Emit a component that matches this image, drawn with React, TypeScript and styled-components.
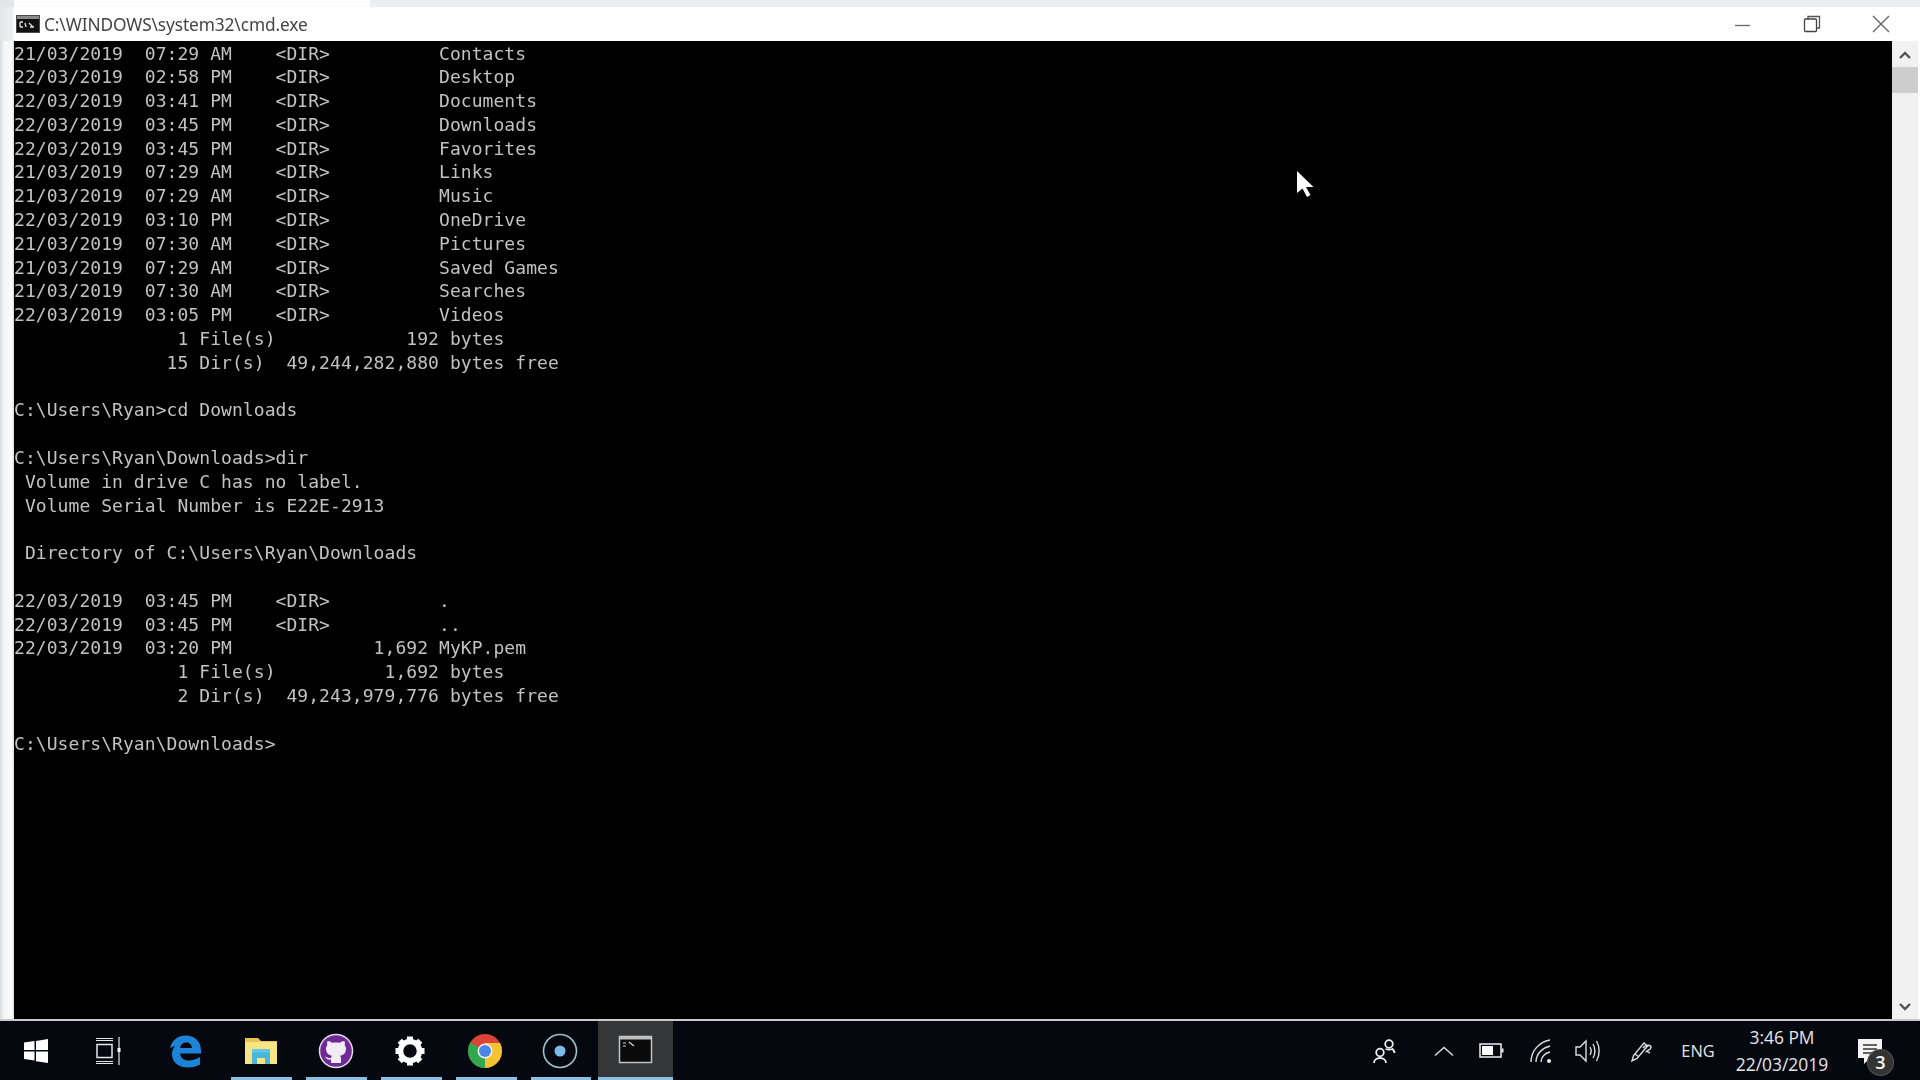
import React from "react";
import styled, { createGlobalStyle } from "styled-components";

const Global = createGlobalStyle`
  html, body { margin: 0; padding: 0; background: #000; overflow: hidden; }
`;

const Page = styled.div`
  position: relative;
  width: 1920px;
  height: 1080px;
  display: flex;
  flex-direction: column;
  overflow: hidden;
  background: #fff;
`;

const TopStrip = styled.div`
  height: 7px;
  display: flex;
  flex: none;
`;
const StripEdge = styled.div`
  width: 14px;
  background: #e3e5ea;
`;
const StripWhite = styled.div`
  width: 356px;
  background: #fcfcfc;
`;
const StripRest = styled.div`
  flex: 1;
  background: #eceef0;
`;

const TitleBar = styled.header`
  height: 34px;
  flex: none;
  display: flex;
  align-items: center;
  background: linear-gradient(90deg, #e4e6ea 0, #eef0f3 13px, #fff 14px);
  padding-left: 16px;
`;
const TitleIcon = styled.svg`
  width: 24px;
  height: 18px;
  flex: none;
  margin-right: 4px;
`;
const TitleText = styled.span`
  font-family: "Noto Sans", "Open Sans", sans-serif;
  font-size: 17.3px;
  color: #444;
  letter-spacing: -0.1px;
  filter: blur(0.3px);
`;
const WindowControls = styled.div`
  margin-left: auto;
  display: flex;
  align-items: center;
  margin-right: 29px;
  gap: 49px;
`;
const ControlIcon = styled.svg`
  width: 20px;
  height: 20px;
  display: block;
`;

const Body = styled.main`
  flex: 1;
  display: flex;
  min-height: 0;
`;
const LeftEdge = styled.div`
  width: 14px;
  flex: none;
  background: linear-gradient(90deg, #d8dade 0, #f4f5f7 4px, #fcfcfc 12px, #d8d8d8 14px);
`;
const Terminal = styled.pre`
  flex: 1;
  margin: 0;
  padding: 0.5px 0 0;
  background: #000;
  color: #c2c2c2;
  font-family: "DejaVu Sans Mono", "Liberation Mono", monospace;
  font-size: 18px;
  letter-spacing: 0.06px;
  line-height: 23.8px;
  overflow: hidden;
  filter: blur(0.4px);
`;
const Row = styled.div`
  height: 23.8px;
  white-space: pre;
`;
const Scrollbar = styled.aside`
  width: 28px;
  flex: none;
  display: flex;
  flex-direction: column;
  align-items: center;
  background: #f1f1f1;
  border-right: 2px solid #fff;
  box-sizing: border-box;
`;
const ScrollArrow = styled.svg`
  width: 16px;
  height: 12px;
  flex: none;
  margin: 8px 0 6px;
`;
const ScrollThumb = styled.div`
  width: 100%;
  height: 26px;
  background: #cdcdcd;
  flex: none;
`;
const ScrollTrack = styled.div`
  flex: 1;
`;

const Taskbar = styled.footer`
  height: 61px;
  flex: none;
  box-sizing: border-box;
  border-top: 2px solid #c9c9c9;
  display: flex;
  align-items: stretch;
  background: #05080e;
`;
const TaskItem = styled.div<{ $open?: boolean; $active?: boolean }>`
  position: relative;
  width: 74.8px;
  flex: none;
  box-sizing: border-box;
  padding-right: ${(p) => (p.$active ? "0" : "2px")};
  display: flex;
  align-items: center;
  justify-content: center;
  background: ${(p) => (p.$active ? "#353638" : "transparent")};
  &::after {
    content: "";
    display: ${(p) => (p.$open || p.$active ? "block" : "none")};
    position: absolute;
    bottom: 0;
    height: 3px;
    left: ${(p) => (p.$active ? "0" : "7px")};
    right: ${(p) => (p.$active ? "0" : "7px")};
    background: #8cbfe4;
  }
`;
const TaskIcon = styled.svg`
  width: 36px;
  height: 36px;
  display: block;
`;
const Tray = styled.div`
  margin-left: auto;
  display: flex;
  align-items: center;
  padding-right: 30px;
`;
const TrayItem = styled.div<{ $ml: number; $w?: number }>`
  width: ${(p) => p.$w ?? 40}px;
  margin-left: ${(p) => p.$ml}px;
  display: flex;
  justify-content: center;
  align-items: center;
  position: relative;
`;
const TrayIcon = styled.svg`
  width: 30px;
  height: 30px;
  display: block;
`;
const TrayText = styled.span`
  font-family: "Open Sans", "Noto Sans", sans-serif;
  font-size: 16.4px;
  color: #e4e4e4;
`;
const Clock = styled.div`
  display: flex;
  flex-direction: column;
  align-items: center;
  font-family: "Open Sans", "Noto Sans", sans-serif;
  font-size: 17.4px;
  line-height: 27px;
  color: #e6e6e6;
  white-space: nowrap;
`;
const Badge = styled.span`
  position: absolute;
  right: -3px;
  bottom: -9px;
  width: 25px;
  height: 25px;
  border-radius: 50%;
  background: #333;
  box-shadow: 0 0 0 1px #555;
  color: #f6f6f6;
  font-family: "Open Sans", sans-serif;
  font-size: 18px;
  font-weight: 600;
  display: flex;
  align-items: center;
  justify-content: center;
`;
const Cursor = styled.svg`
  position: absolute;
  left: 1295px;
  top: 170px;
  width: 20px;
  height: 28px;
`;

const lines = [
  "21/03/2019  07:29 AM    <DIR>          Contacts",
  "22/03/2019  02:58 PM    <DIR>          Desktop",
  "22/03/2019  03:41 PM    <DIR>          Documents",
  "22/03/2019  03:45 PM    <DIR>          Downloads",
  "22/03/2019  03:45 PM    <DIR>          Favorites",
  "21/03/2019  07:29 AM    <DIR>          Links",
  "21/03/2019  07:29 AM    <DIR>          Music",
  "22/03/2019  03:10 PM    <DIR>          OneDrive",
  "21/03/2019  07:30 AM    <DIR>          Pictures",
  "21/03/2019  07:29 AM    <DIR>          Saved Games",
  "21/03/2019  07:30 AM    <DIR>          Searches",
  "22/03/2019  03:05 PM    <DIR>          Videos",
  "               1 File(s)            192 bytes",
  "              15 Dir(s)  49,244,282,880 bytes free",
  "",
  "C:\\Users\\Ryan>cd Downloads",
  "",
  "C:\\Users\\Ryan\\Downloads>dir",
  " Volume in drive C has no label.",
  " Volume Serial Number is E22E-2913",
  "",
  " Directory of C:\\Users\\Ryan\\Downloads",
  "",
  "22/03/2019  03:45 PM    <DIR>          .",
  "22/03/2019  03:45 PM    <DIR>          ..",
  "22/03/2019  03:20 PM             1,692 MyKP.pem",
  "               1 File(s)          1,692 bytes",
  "               2 Dir(s)  49,243,979,776 bytes free",
  "",
  "C:\\Users\\Ryan\\Downloads>",
];

const Gear = () => {
  const teeth = [0, 45, 90, 135, 180, 225, 270, 315];
  return (
    <TaskIcon viewBox="0 0 36 36">
      <circle cx="18" cy="18" r="9.5" fill="none" stroke="#fff" strokeWidth="5.5" />
      {teeth.map((a) => (
        <rect key={a} x="15" y="3.5" width="6" height="6" fill="#fff" transform={`rotate(${a} 18 18)`} />
      ))}
    </TaskIcon>
  );
};

export default function App() {
  return (
    <Page>
      <Global />
      <TopStrip>
        <StripEdge />
        <StripWhite />
        <StripRest />
      </TopStrip>
      <TitleBar>
        <TitleIcon viewBox="0 0 24 18">
          <rect width="24" height="18" fill="#4a4a4a" />
          <rect x="1" y="1" width="22" height="3" fill="#8a8a8a" />
          <rect x="1" y="4" width="22" height="13" fill="#111" />
          <path d="M4 7h3M4 12h3M4 7v5M9 8l1 4M13 8l4 4 M14 12h4" stroke="#ddd" strokeWidth="1.3" fill="none" />
        </TitleIcon>
        <TitleText>C:\WINDOWS\system32\cmd.exe</TitleText>
        <WindowControls>
          <ControlIcon viewBox="0 0 20 20">
            <path d="M2 11.5h15" stroke="#666" strokeWidth="1.3" />
          </ControlIcon>
          <ControlIcon viewBox="0 0 20 20">
            <path d="M6 5V2.5h11.5V14H15" fill="none" stroke="#555" strokeWidth="1.3" />
            <rect x="2.5" y="5" width="12" height="12.5" rx="1" fill="none" stroke="#444" strokeWidth="1.3" />
          </ControlIcon>
          <ControlIcon viewBox="0 0 20 20">
            <path d="M2 2l16 16M18 2L2 18" stroke="#666" strokeWidth="1.4" />
          </ControlIcon>
        </WindowControls>
      </TitleBar>
      <Body>
        <LeftEdge />
        <Terminal>
          {lines.map((l, i) => (
            <Row key={i}>{l}</Row>
          ))}
        </Terminal>
        <Scrollbar>
          <ScrollArrow viewBox="0 0 16 12">
            <path d="M3 9l5-5 5 5" fill="none" stroke="#555" strokeWidth="2.4" />
          </ScrollArrow>
          <ScrollThumb />
          <ScrollTrack />
          <ScrollArrow viewBox="0 0 16 12">
            <path d="M3 3l5 5 5-5" fill="none" stroke="#555" strokeWidth="2.4" />
          </ScrollArrow>
        </Scrollbar>
      </Body>
      <Taskbar>
        <TaskItem>
          <TaskIcon viewBox="0 0 36 36">
            <path d="M6 9.5l10.5-1.4V17H6zM18 7.9L30 6v11H18zM6 18.6h10.5v8.8L6 26zM18 18.6h12V30l-12-1.8z" fill="#fff" />
          </TaskIcon>
        </TaskItem>
        <TaskItem>
          <TaskIcon viewBox="3 0 36 36">
            <path d="M6 7.5h17M6 28.5h17M6 30.5h17M6 5.5h17" stroke="#e8e8e8" strokeWidth="1.2" />
            <rect x="7" y="11.5" width="15" height="13" fill="none" stroke="#e8e8e8" strokeWidth="1.5" />
            <path d="M29 4v28" stroke="#d8d8d8" strokeWidth="1.3" />
            <rect x="27.5" y="15" width="3" height="4" fill="#fff" />
          </TaskIcon>
        </TaskItem>
        <TaskItem>
          <TaskIcon viewBox="0 0 36 36">
            <path
              d="M2 15C4 7 10 2.500 18 2.500c9 0 15 6.500 15 15v3H12c.5 4.500 4 7 8.500 7 4 0 8-1.200 11.500-3.500v7.500c-3.500 2-7.500 3-12 3C10 34.500 4 29 4 21c0-3 1-5.500 3-8-2 .5-3.500 1.500-5 2zM12 15h12c-.3-3.500-2.500-5.500-5.800-5.500-3.200 0-5.500 2-6.200 5.500z"
              fill="#1c84d6"
              fillRule="evenodd"
            />
          </TaskIcon>
        </TaskItem>
        <TaskItem $open>
          <TaskIcon viewBox="0 0 36 36">
            <path d="M2 5h13l3 3h16v5H2z" fill="#e9c34f" />
            <rect x="2" y="9" width="32" height="22" rx="0.5" fill="#f7e483" />
            <path d="M9 31V19h18v12h-5v-6h-8v6z" fill="#4bb5dc" />
            <rect x="9" y="16" width="18" height="3.500" fill="#62c6e8" />
          </TaskIcon>
        </TaskItem>
        <TaskItem $open>
          <TaskIcon viewBox="0 0 36 36">
            <circle cx="18" cy="18" r="16.500" fill="#6f2a96" stroke="#e6dcea" strokeWidth="1.500" />
            <path
              d="M13 30v-3.500c-3 .5-5-.5-6-3 2 .5 3 2 6 1.500.2-1 .5-1.800 1-2.300-4-.7-6-3-6-6.700 0-1.500.5-2.800 1.300-3.800-.3-1.200-.3-2.700.3-4.200 1.800 0 3.200.8 4.400 1.700 1.500-.4 6.500-.4 8 0 1.200-.9 2.600-1.700 4.400-1.700.6 1.500.6 3 .3 4.200.8 1 1.300 2.300 1.300 3.800 0 3.700-2 6-6 6.700.7.800 1 1.800 1 3V30z"
              fill="#f1ecf3"
            />
          </TaskIcon>
        </TaskItem>
        <TaskItem $open>
          <Gear />
        </TaskItem>
        <TaskItem $open>
          <TaskIcon viewBox="0 0 36 36">
            <circle cx="18" cy="18" r="17" fill="#db4437" />
            <path d="M18 18L3.300 9.500A17 17 0 0 0 18 35z" fill="#2fa84f" />
            <path d="M18 18V35A17 17 0 0 0 33 10H18z" fill="#f4c430" />
            <circle cx="18" cy="18" r="7.500" fill="#f1f1f1" />
            <circle cx="18" cy="18" r="6" fill="#4a86e8" />
          </TaskIcon>
        </TaskItem>
        <TaskItem $open>
          <TaskIcon viewBox="0 0 36 36">
            <circle cx="18" cy="18" r="16.500" fill="none" stroke="#9cc3cd" strokeWidth="1.600" />
            <circle cx="18" cy="18" r="5.500" fill="#7fbbe6" />
          </TaskIcon>
        </TaskItem>
        <TaskItem $active>
          <TaskIcon viewBox="0 0 36 36">
            <rect x="1.500" y="3.500" width="32" height="26" fill="#0a0a0a" stroke="#c4c4c4" strokeWidth="1.500" />
            <rect x="2" y="4" width="31" height="2.500" fill="#bdbdbd" />
            <path d="M5 10h3M5 13h3M11 9l5 4" stroke="#d8d8d8" strokeWidth="1.200" fill="none" />
          </TaskIcon>
        </TaskItem>
        <Tray>
          <TrayItem $ml={0}>
            <TrayIcon viewBox="0 0 30 30">
              <circle cx="11" cy="16.500" r="3.800" fill="none" stroke="#eee" strokeWidth="1.800" />
              <path d="M5 27c0-3 2.500-5 6-5s6 2 6 5" fill="none" stroke="#eee" strokeWidth="1.800" />
              <circle cx="20" cy="8" r="3.800" fill="none" stroke="#eee" strokeWidth="1.800" />
              <path d="M16.500 13c1.500.5 5.500.5 7 0 1 1 2 2.500 2 4" fill="none" stroke="#eee" strokeWidth="1.800" />
            </TrayIcon>
          </TrayItem>
          <TrayItem $ml={20}>
            <TrayIcon viewBox="0 0 30 30">
              <path d="M6 19.500l9-8 9 8" fill="none" stroke="#ddd" strokeWidth="1.500" />
            </TrayIcon>
          </TrayItem>
          <TrayItem $ml={8}>
            <TrayIcon viewBox="0 0 30 30">
              <rect x="3" y="8" width="21" height="13" fill="none" stroke="#eee" strokeWidth="1.500" />
              <rect x="5" y="10" width="11" height="9" fill="#fff" />
              <rect x="24.500" y="12.500" width="2" height="4" fill="#eee" />
            </TrayIcon>
          </TrayItem>
          <TrayItem $ml={10}>
            <TrayIcon viewBox="0 0 30 30">
              <path d="M4 26C4 15 12 6 23 4M9 26c0-8 6-14 14-16M14 26c0-5 4-9 9-10" fill="none" stroke="#ddd" strokeWidth="1.400" />
              <circle cx="22" cy="25" r="2" fill="#eee" />
            </TrayIcon>
          </TrayItem>
          <TrayItem $ml={5}>
            <TrayIcon viewBox="0 0 30 30">
              <path d="M4 11h4l6-6v20l-6-6H4z" fill="none" stroke="#ddd" strokeWidth="1.400" />
              <path d="M18 11c1.500 2.500 1.500 5.500 0 8M21 8c2.500 4 2.500 10 0 14M24.500 5c3.500 6 3.500 14 0 20" fill="none" stroke="#ddd" strokeWidth="1.400" />
            </TrayIcon>
          </TrayItem>
          <TrayItem $ml={15}>
            <TrayIcon viewBox="0 0 30 30">
              <path d="M5 25l1.500-5.500L17 7l3.500 3L10 22.500zM8 18l4 3M16 12c3-4 8-3 8-.5 0 2-3 2.500-4.500 4 1.500 0 3 .5 3 2" fill="none" stroke="#ddd" strokeWidth="1.400" />
            </TrayIcon>
          </TrayItem>
          <TrayItem $ml={16}>
            <TrayText>ENG</TrayText>
          </TrayItem>
          <TrayItem $ml={14} $w={100}>
            <Clock>
              <span>3:46 PM</span>
              <span>22/03/2019</span>
            </Clock>
          </TrayItem>
          <TrayItem $ml={18}>
            <TrayIcon viewBox="0 0 30 30">
              <path d="M3 3h24v19H15l-6 6v-6H3z" fill="#f4f4f4" />
              <path d="M8 9h14M8 13h14M8 17h9" stroke="#333" strokeWidth="1.400" />
            </TrayIcon>
            <Badge>3</Badge>
          </TrayItem>
        </Tray>
      </Taskbar>
      <Cursor viewBox="0 0 20 28">
        <path d="M2 1v22l5.500-4.500 4.500 8.500 3.500-2-4.500-8h7.500z" fill="#fff" />
      </Cursor>
    </Page>
  );
}
